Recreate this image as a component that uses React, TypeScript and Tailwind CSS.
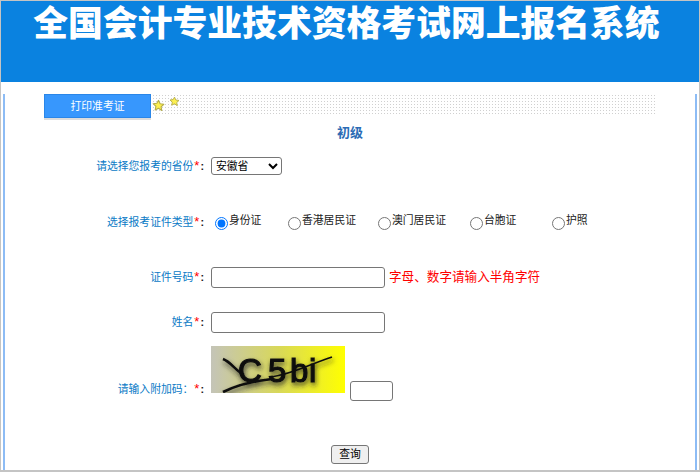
const CJK = "font-['Liberation_Sans','Noto_Sans_CJK_SC',sans-serif]";

const idTypes = [
  { label: "身份证", width: "w-[73px]", checked: true },
  { label: "香港居民证", width: "w-[90px]", checked: false },
  { label: "澳门居民证", width: "w-[92px]", checked: false },
  { label: "台胞证", width: "w-[82px]", checked: false },
  { label: "护照", width: "w-[50px]", checked: false },
];

function Label({ text, className = "" }: { text: string; className?: string }) {
  return (
    <label className={`w-[199px] shrink-0 text-right text-[10.8px] leading-[16px] text-[#0a7ac6] ${className}`}>
      {text}
      <span className="pl-[1px] text-[13px] leading-[10px] text-[#f00]">*</span>
      <span className="pl-[1px] font-bold text-[#222]">:</span>
    </label>
  );
}

function Star({ className = "" }: { className?: string }) {
  return (
    <svg viewBox="0 0 24 24" className={className}>
      <path
        d="M12 2.5l3 6.3 6.800.9-5 4.700 1.300 6.800L12 17l-6.100 3.200 1.300-6.800-5-4.700 6.800-.9z"
        fill="#fdf04f"
        stroke="#b5ad4a"
        strokeWidth="2"
        strokeLinejoin="round"
      />
    </svg>
  );
}

function Captcha() {
  return (
    <svg viewBox="0 0 134 47" className="block h-[47px] w-[134px] shrink-0">
      <defs>
        <linearGradient id="bg" x1="0" x2="1" y1="0" y2="0">
          <stop offset="0" stopColor="#c4c4b8" />
          <stop offset="0.5" stopColor="#d8d85a" />
          <stop offset="1" stopColor="#ffff00" />
        </linearGradient>
        <filter id="soft" x="-20%" y="-40%" width="140%" height="180%">
          <feDropShadow dx="1" dy="3" stdDeviation="2.500" floodColor="#222" floodOpacity="0.8" />
        </filter>
      </defs>
      <rect width="134" height="47" fill="url(#bg)" />
      <g filter="url(#soft)">
        <text
          x="27 57 79 98"
          y="36"
          fontFamily="'Liberation Sans',sans-serif"
          fontSize="33"
          fill="#111"
          stroke="#111"
          strokeWidth="1.200"
        >
          C5bi
        </text>
        <path d="M12 13c8 3 12 11 21 16" fill="none" stroke="#111" strokeWidth="2.600" />
        <path d="M12 46c14-7 30-11 49-13" fill="none" stroke="#111" strokeWidth="2.600" />
        <path d="M60 31c22-3 34-11 61-20" fill="none" stroke="#111" strokeWidth="1.600" />
      </g>
    </svg>
  );
}

export default function App() {
  return (
    <div className={`h-[472px] w-[700px] overflow-hidden border border-b-2 border-[#c4c4c4] bg-white ${CJK}`}>
      <header className="flex h-[81px] justify-center bg-[#0a82e0]">
        <h1 className="mt-[1px] mr-[7px] text-[34.8px] leading-[44px] font-black whitespace-nowrap text-white">
          全国会计专业技术资格考试网上报名系统
        </h1>
      </header>

      <main className="mx-[2px] h-[388px] border-x-2 border-[#8dbcf5] pl-[39px]">
        {/* Tab bar */}
        <div className="mt-[12px] flex h-[22px] w-[612px] items-start bg-white bg-[radial-gradient(#d0d0d0_0.8px,transparent_0.9px)] bg-[length:3px_3px]">
          <div className="flex h-[24px] w-[107px] items-center justify-center border border-[#2a86e8] bg-[#3797fd] text-[10.8px] text-white shadow-[0_2px_0_#dcdcdc]">
            打印准考证
          </div>
          <Star className="mt-[5px] ml-[1px] h-[13px] w-[13px]" />
          <Star className="mt-[2px] ml-[4px] h-[11px] w-[11px]" />
        </div>

        <h2 className="mt-[7px] ml-[293px] text-[13px] leading-[20px] font-bold text-[#2b6cb5]">初级</h2>

        <div className="-ml-[39px]">
          <div className="mt-[12px] flex h-[22px] items-center">
            <Label text="请选择您报考的省份" />
            <select
              defaultValue="安徽省"
              className="ml-[7px] h-[18px] w-[71px] rounded-[3px] border border-[#767676] bg-white text-[10.8px] text-black"
            >
              <option>安徽省</option>
            </select>
          </div>

          <div className="mt-[34px] flex h-[22px] items-center">
            <Label text="选择报考证件类型" />
            <div className="ml-[11px] flex">
              {idTypes.map((t) => (
                <label key={t.label} className={`flex items-center text-[10.8px] text-[#222] ${t.width}`}>
                  <input
                    type="radio"
                    name="idType"
                    defaultChecked={t.checked}
                    className="m-0 mt-[3px] mr-[1px] h-[13px] w-[13px] accent-[#0075ff]"
                  />
                  <span className="-mt-[3px]">{t.label}</span>
                </label>
              ))}
            </div>
          </div>

          <div className="mt-[33px] flex h-[22px] items-center">
            <Label text="证件号码" />
            <input className="ml-[7px] h-[21px] w-[174px] rounded-[3px] border border-[#767676] bg-white" />
            <span className="ml-[4px] text-[12.6px] text-[#f00]">字母、数字请输入半角字符</span>
          </div>

          <div className="mt-[23px] flex h-[22px] items-center">
            <Label text="姓名" />
            <input className="ml-[7px] h-[21px] w-[174px] rounded-[3px] border border-[#767676] bg-white" />
          </div>

          <div className="mt-[13px] flex items-end">
            <Label text="请输入附加码：" className="mb-[-4px]" />
            <div className="ml-[7px]">
              <Captcha />
            </div>
            <input className="mb-[-8px] ml-[5px] h-[20px] w-[43px] rounded-[3px] border border-[#767676] bg-white" />
          </div>

          <div className="mt-[52px] flex justify-center">
            <button className="h-[19px] w-[38px] rounded-[3px] border border-[#767676] bg-[#efefef] text-[10.8px] text-black">
              查询
            </button>
          </div>
        </div>
      </main>
    </div>
  );
}
